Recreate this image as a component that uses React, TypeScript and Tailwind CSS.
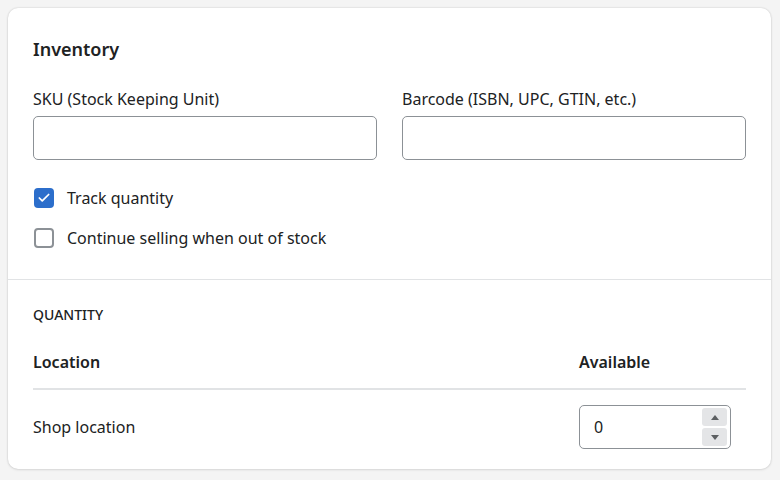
import { Check } from 'lucide-react'

function Field({ label }: { label: string }) {
  return (
    <div className="flex flex-col">
      <label className="text-[16px] leading-5 text-[#202223] mb-[7px]">{label}</label>
      <input className="h-[44px] w-full rounded-[5px] border border-[#8c9196] bg-white px-3 outline-none" />
    </div>
  )
}

export default function App() {
  return (
    <div
      className="min-h-[480px] bg-[#f4f4f4] pt-[8px] pl-[8px] pr-[9px] pb-[11px]"
      style={{ fontFamily: '"Segoe UI", "Noto Sans", sans-serif' }}
    >
      <div className="rounded-[10px] bg-white shadow-[0_0_2px_rgba(0,0,0,0.18),0_1px_3px_rgba(0,0,0,0.08)]">
        <div className="px-[25px] pt-[29px] pb-[31px]">
          <h2 className="text-[18px] leading-6 font-semibold text-[#202223]">Inventory</h2>
          <div className="mt-[28px] grid grid-cols-2 gap-[25px]">
            <Field label="SKU (Stock Keeping Unit)" />
            <Field label="Barcode (ISBN, UPC, GTIN, etc.)" />
          </div>
          <div className="mt-[28px] flex flex-col gap-[20px]">
            <label className="flex items-center gap-[13px] text-[16px] leading-5 text-[#202223]">
              <span className="ml-[1px] flex h-[20px] w-[20px] items-center justify-center rounded-[4px] bg-[#2c6ecb]">
                <Check size={14} strokeWidth={3} color="white" />
              </span>
              Track quantity
            </label>
            <label className="flex items-center gap-[13px] text-[16px] leading-5 text-[#202223]">
              <span className="ml-[1px] h-[20px] w-[20px] rounded-[4px] border-2 border-[#8c9196] bg-white" />
              Continue selling when out of stock
            </label>
          </div>
        </div>
        <div className="border-t border-[#e1e3e5] px-[25px] pt-[25px] pb-[20px]">
          <div className="text-[14px] leading-5 font-medium text-[#202223]">QUANTITY</div>
          <div className="mt-[27px] flex items-center border-b-2 border-[#e1e3e5] pb-[16px] text-[16px] leading-5 font-semibold text-[#202223]">
            <span className="flex-1">Location</span>
            <span className="w-[167px]">Available</span>
          </div>
          <div className="mt-[15px] flex items-center text-[16px] text-[#202223]">
            <span className="flex-1">Shop location</span>
            <div className="mr-[15px] flex h-[44px] w-[152px] items-center rounded-[5px] border border-[#8c9196] bg-white pl-[14px] pr-[3px]">
              <span className="flex-1 text-[16px]">0</span>
              <div className="flex flex-col gap-[2px]">
                <button className="flex h-[18px] w-[25px] items-center justify-center rounded-[3px] bg-[#e4e5e7]">
                  <svg width="8" height="5" viewBox="0 0 8 5"><path d="M4 0L8 5H0z" fill="#5c5f62" /></svg>
                </button>
                <button className="flex h-[18px] w-[25px] items-center justify-center rounded-[3px] bg-[#e4e5e7]">
                  <svg width="8" height="5" viewBox="0 0 8 5"><path d="M0 0h8L4 5z" fill="#5c5f62" /></svg>
                </button>
              </div>
            </div>
          </div>
        </div>
      </div>
    </div>
  )
}
